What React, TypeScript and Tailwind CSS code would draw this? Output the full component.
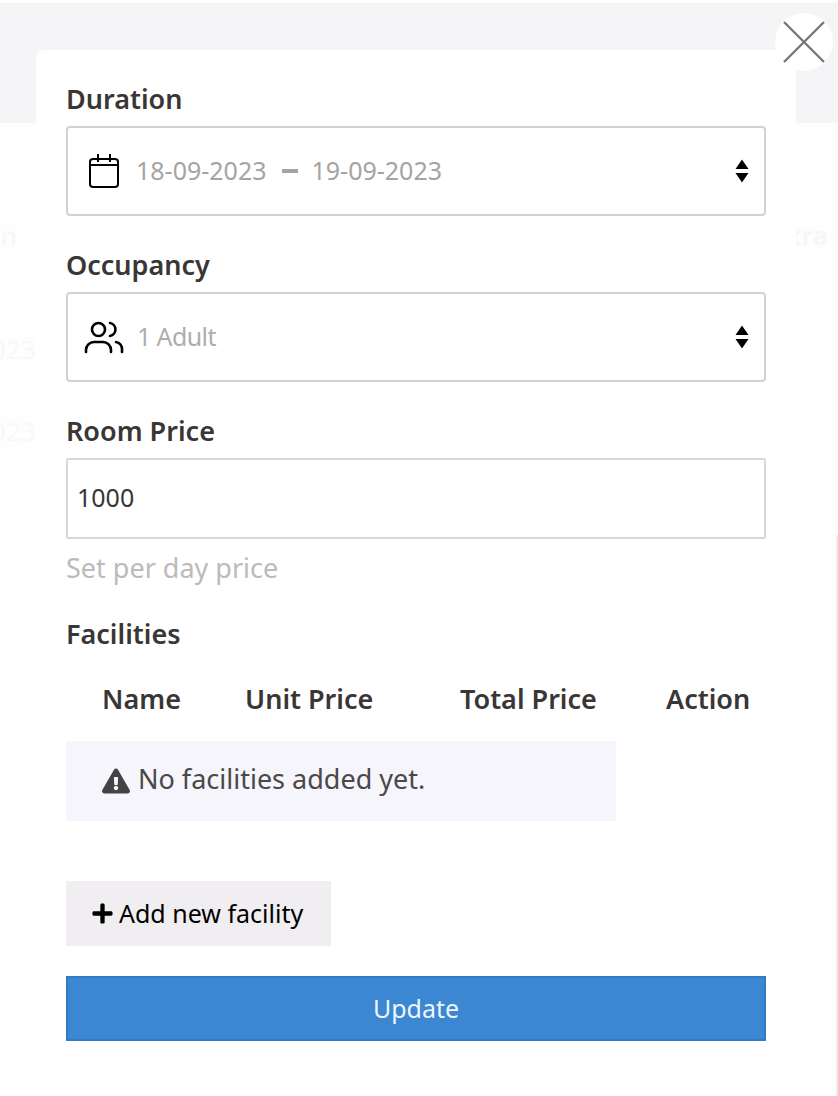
import { FaExclamationTriangle, FaPlus } from 'react-icons/fa'

const fontStack = '[font-family:"Noto_Sans","Open_Sans",sans-serif]'

function FieldLabel({ children }: { children: string }) {
  return <div className="h-9 mb-[9px] text-[27px] leading-9 font-semibold text-[#3a3636]">{children}</div>
}

function SortArrows() {
  return (
    <svg width="14" height="24" viewBox="0 0 14 24" className="ml-auto mr-[15px] shrink-0" fill="#000">
      <path d="M7 0.5 L13.5 10 L0.5 10 Z" />
      <path d="M0.5 14 L13.5 14 L7 23.5 Z" />
    </svg>
  )
}

function CalendarIcon() {
  return (
    <svg width="32" height="36" viewBox="0 0 32 36" fill="none" stroke="#000" strokeWidth="2" className="ml-[20px] mr-[16px] shrink-0">
      <rect x="2" y="6" width="28" height="28" rx="3" />
      <path d="M2 12 H30" />
      <path d="M10 1 V9 M22 1 V9" />
    </svg>
  )
}

function UsersIcon() {
  return (
    <svg width="40" height="34" viewBox="0 0 40 34" fill="none" stroke="#000" strokeWidth="2.6" strokeLinecap="round" className="ml-[16px] mr-[13px] shrink-0">
      <circle cx="14.5" cy="9.5" r="6.5" />
      <path d="M2 32 v-2 a8 8 0 0 1 8-8 h9 a8 8 0 0 1 8 8 v2" />
      <path d="M26 3 a6.6 6.6 0 0 1 0 13" />
      <path d="M32 22 a7 7 0 0 1 6 7.5 v2.5" />
    </svg>
  )
}

function SelectBox({ icon, children }: { icon: React.ReactNode; children: React.ReactNode }) {
  return (
    <div className="h-[90px] flex items-center border-2 border-[#d2d2d2] rounded-[4px] bg-white">
      {icon}
      {children}
      <SortArrows />
    </div>
  )
}

export default function App() {
  return (
    <div className={`relative h-[1096px] w-[838px] overflow-hidden bg-[#fefefe] ${fontStack}`}>
      {/* page behind the modal */}
      <div className="mt-[3px] h-[120px] bg-[#f5f4f7]" />
      <div className="absolute left-[-64px] top-[216px] text-[26px] font-semibold text-[#f8f8fa]">Action</div>
      <div className="absolute left-[762px] top-[216px] text-[26px] font-semibold text-[#f6f6f9]">Extra</div>
      <div className="absolute left-[-100px] top-[330px] text-[26px] text-[#f8f8fa]">18-09-2023</div>
      <div className="absolute left-[-100px] top-[412px] text-[26px] text-[#f8f8fa]">19-09-2023</div>
      <div className="absolute right-0 top-[535px] bottom-0 w-[3px] bg-gradient-to-r from-[#fefefe] to-[#e6e4e8]" />

      {/* modal */}
      <div className="absolute left-9 top-[50px] w-[760px] h-[1046px] rounded-t-[8px] bg-white px-[30px] pt-[31px]">
        <FieldLabel>Duration</FieldLabel>
        <SelectBox icon={<CalendarIcon />}>
          <span className="text-[25px] text-[#a6a3a3]">18-09-2023</span>
          <span className="ml-[15px] mr-[14px] w-[16px] h-[4px] bg-[#a6a3a3]" />
          <span className="text-[25px] text-[#a6a3a3]">19-09-2023</span>
        </SelectBox>

        <div className="mt-[31px]">
          <FieldLabel>Occupancy</FieldLabel>
        </div>
        <SelectBox icon={<UsersIcon />}>
          <span className="text-[25px] tracking-[-0.6px] text-[#b0adad]">1 Adult</span>
        </SelectBox>

        <div className="mt-[31px]">
          <FieldLabel>Room Price</FieldLabel>
        </div>
        <div className="h-[81px] flex items-center pl-[9px] pb-[2px] border-2 border-[#d8d8d8] rounded-[2px] text-[25px] text-[#3a3636]">
          1000
        </div>
        <div className="mt-[9px] h-10 text-[27px] leading-10 text-[#bdbaba]">Set per day price</div>

        <div className="mt-7 h-9 text-[27px] leading-9 font-semibold text-[#3a3636]">Facilities</div>

        <div className="mt-[5px] h-[84px] grid grid-cols-[143px_214px_206px_100px] pl-9 pt-6 text-[27px] leading-9 font-semibold text-[#3a3636]">
          <div>Name</div>
          <div>Unit Price</div>
          <div className="pl-px">Total Price</div>
          <div className="pl-px">Action</div>
        </div>

        <div className="w-[550px] h-20 flex items-center gap-2 pl-9 bg-[#f5f5fb] text-[27px] text-[#4a4848]">
          <FaExclamationTriangle size={28} color="#444242" className="shrink-0" />
          <span className="mb-1">No facilities added yet.</span>
        </div>

        <button className="mt-[60px] flex items-center gap-[5px] pl-[25px] w-[265px] h-[65px] bg-[#f0eef1] text-[25px] text-black">
          <FaPlus size={23} />
          <span>Add new facility</span>
        </button>

        <button className="mt-[30px] block w-[700px] h-[65px] border-2 border-[#2f7bc4] bg-[#3b87d2] text-[25px] text-[#eef5fc]">
          Update
        </button>
      </div>

      {/* close button over the modal corner */}
      <div className="absolute left-[775px] top-[13px] w-[58px] h-[58px] rounded-full bg-white flex items-center justify-center">
        <svg width="44" height="44" viewBox="0 0 44 44" stroke="#777777" strokeWidth="2.4">
          <path d="M2 2 L42 42 M42 2 L2 42" />
        </svg>
      </div>
    </div>
  )
}
